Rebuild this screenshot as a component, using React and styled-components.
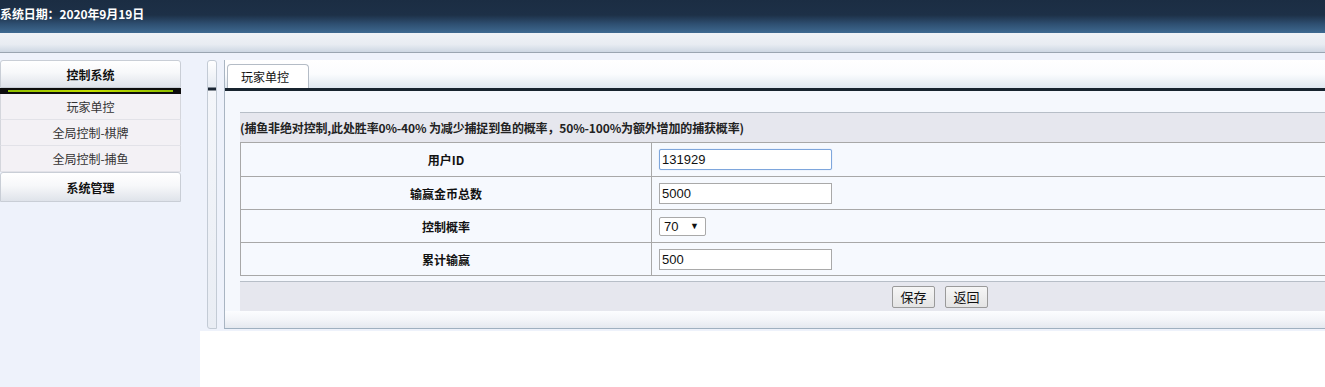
import React from "react";
import styled, { createGlobalStyle } from "styled-components";

const GlobalStyle = createGlobalStyle`
  html, body {
    margin: 0;
    padding: 0;
    background: #fff;
    font-family: "Noto Sans CJK SC", "Liberation Sans", sans-serif;
    font-size: 12px;
    color: #222;
  }
  body { overflow: hidden; }
`;

const Page = styled.div`
  width: 1325px;
  height: 387px;
  display: flex;
  flex-direction: column;
  overflow: hidden;
`;

const TopBar = styled.div`
  height: 33px;
  flex: none;
  background: linear-gradient(
    to bottom,
    #1b2d43 0,
    #1d3047 15px,
    #2e4f71 24px,
    #3f6990 33px
  );
  color: #fff;
  font-weight: bold;
  line-height: 28px;
  white-space: nowrap;
  letter-spacing: -0.1px;
`;

const ToolBar = styled.div`
  height: 19px;
  flex: none;
  background: linear-gradient(to bottom, #f0f2f6 0, #e8ecf2 60%, #cdd7e3 100%);
  border-bottom: 1px solid #9aa5b1;
`;

const Body = styled.div`
  flex: 1;
  display: flex;
  min-height: 0;
`;

const Aside = styled.div`
  width: 200px;
  flex: none;
  background: #eef2fb;
  padding-top: 7px;
`;

const Menu = styled.div`
  width: 181px;
`;

const MenuHead = styled.div`
  height: ${(p) => p.$h}px;
  display: flex;
  align-items: center;
  justify-content: center;
  font-weight: bold;
  color: #111;
  background: linear-gradient(to bottom, #ffffff 0, #f7f8fa 45%, #dfe3ea 100%);
  border: 1px solid #c9ced6;
  border-radius: 3px 3px 0 0;
  box-sizing: border-box;
`;

const MenuBar = styled.div`
  height: 6px;
  background: #0d0d0d;
  padding: 2px 8px 0;
  box-sizing: border-box;
  &::before {
    content: "";
    display: block;
    height: 2px;
    background: linear-gradient(to right, #8fbf00, #c6e000 50%, #8fbf00);
  }
`;

const MenuItem = styled.div`
  height: 26px;
  display: flex;
  align-items: center;
  justify-content: center;
  background: #f3f1f5;
  color: #333;
  border-left: 1px solid #d4d6dc;
  border-right: 1px solid #d4d6dc;
  border-bottom: 1px solid #e2e2e8;
  box-sizing: border-box;
`;

const Main = styled.div`
  flex: 1;
  display: flex;
  flex-direction: column;
  min-width: 0;
`;

const Frame = styled.div`
  display: flex;
  background: #eef2fb;
  padding: 7px 0 2px 7px;
  gap: 7px;
`;

const SideRail = styled.div`
  width: 10px;
  flex: none;
  border: 1px solid #c3cbd5;
  border-radius: 3px 3px 0 3px;
  box-sizing: border-box;
  background: linear-gradient(
    to bottom,
    #ffffff 0,
    #e6ebf2 26px,
    #1a2633 27px,
    #1a2633 29px,
    #f4f6fa 30px,
    #e9edf4 100%
  );
`;

const Panel = styled.div`
  flex: 1;
  min-width: 0;
  border-left: 1px solid #a9b5c2;
  border-bottom: 1px solid #9fb0c0;
  background: #f5f8fd;
`;

const TabStrip = styled.div`
  height: 28px;
  display: flex;
  align-items: flex-end;
  padding-left: 2px;
  background: linear-gradient(to bottom, #ffffff 0, #fbfcfe 50%, #dfe7f0 100%);
  border-bottom: 3px solid #18242f;
`;

const Tab = styled.div`
  width: 82px;
  height: 24px;
  box-sizing: border-box;
  border: 1px solid #b4bcc6;
  border-bottom: none;
  border-radius: 4px 4px 0 0;
  background: #fff;
  padding-left: 13px;
  line-height: 24px;
  color: #111;
`;

const Content = styled.div`
  padding: 21px 0 0 15px;
`;

const Caption = styled.div`
  height: 30px;
  line-height: 30px;
  border-top: 1px solid #b7bec7;
  background: #e6e7ee;
  font-weight: bold;
  color: #222;
  white-space: nowrap;
  letter-spacing: -0.15px;
  box-sizing: border-box;
`;

const Table = styled.div`
  border: 1px solid #a8a8a8;
  border-right: none;
  background: #f6f9fe;
`;

const Row = styled.div`
  display: grid;
  grid-template-columns: 411px 1fr;
  height: 33px;
  border-top: ${(p) => (p.$first ? "none" : "1px solid #a8a8a8")};
  box-sizing: border-box;
`;

const Label = styled.div`
  display: flex;
  align-items: center;
  justify-content: center;
  font-weight: bold;
  color: #111;
  border-right: 1px solid #a8a8a8;
`;

const Value = styled.div`
  display: flex;
  align-items: center;
  padding-left: 7px;
`;

const Input = styled.input`
  width: 173px;
  height: 21px;
  box-sizing: border-box;
  border: 1px solid ${(p) => (p.$focus ? "#7ea6dc" : "#a9a9a9")};
  border-radius: ${(p) => (p.$focus ? "2px" : "0")};
  outline: none;
  padding: 0 2px;
  font-family: "Liberation Sans", Arial, sans-serif;
  font-size: 13px;
  color: #111;
  background: #fff;
  box-shadow: ${(p) => (p.$focus ? "0 0 1px #9fc0ea" : "none")};
`;

const SelectBox = styled.div`
  width: 47px;
  height: 19px;
  box-sizing: border-box;
  border: 1px solid #a9a9a9;
  border-radius: 2px;
  background: #fff;
  display: flex;
  align-items: center;
  justify-content: space-between;
  padding: 0 6px 0 4px;
  font-family: "Liberation Sans", Arial, sans-serif;
  font-size: 13px;
  color: #111;
`;

const Caret = styled.span`
  font-size: 9px;
  line-height: 1;
`;

const ButtonRow = styled.div`
  margin-top: 5px;
  height: 30px;
  border-top: 1px solid #b7bec7;
  background: #e6e7ee;
  box-sizing: border-box;
  display: flex;
  align-items: center;
  gap: 10px;
  padding-left: 652px;
`;

const Button = styled.button`
  width: 43px;
  height: 22px;
  padding: 0;
  border: 1px solid #9a9a9a;
  border-radius: 2px;
  background: linear-gradient(to bottom, #f6f6f6, #e4e4e4);
  font-family: "Noto Sans CJK SC", sans-serif;
  font-size: 13px;
  color: #111;
`;

const PanelFoot = styled.div`
  height: 17px;
  background: linear-gradient(to bottom, #fcfdff 0, #f3f5f9 50%, #e4e8ef 100%);
`;

const Blank = styled.div`
  flex: 1;
  background: #fff;
`;

const rows = [
  { label: "用户ID", value: "131929", focus: true },
  { label: "输赢金币总数", value: "5000" },
  { label: "控制概率", select: "70" },
  { label: "累计输赢", value: "500" },
];

export default function App() {
  return (
    <Page>
      <GlobalStyle />
      <TopBar>系统日期：2020年9月19日</TopBar>
      <ToolBar />
      <Body>
        <Aside>
          <Menu>
            <MenuHead $h={28}>控制系统</MenuHead>
            <MenuBar />
            <MenuItem>玩家单控</MenuItem>
            <MenuItem>全局控制-棋牌</MenuItem>
            <MenuItem>全局控制-捕鱼</MenuItem>
            <MenuHead $h={30}>系统管理</MenuHead>
          </Menu>
        </Aside>
        <Main>
          <Frame>
            <SideRail />
            <Panel>
              <TabStrip>
                <Tab>玩家单控</Tab>
              </TabStrip>
              <Content>
                <Caption>
                  (捕鱼非绝对控制,此处胜率0%-40% 为减少捕捉到鱼的概率，50%-100%为额外增加的捕获概率)
                </Caption>
                <Table>
                  {rows.map((r, i) => (
                    <Row key={r.label} $first={i === 0}>
                      <Label>{r.label}</Label>
                      <Value>
                        {r.select ? (
                          <SelectBox>
                            {r.select}
                            <Caret>▼</Caret>
                          </SelectBox>
                        ) : (
                          <Input
                            $focus={r.focus}
                            defaultValue={r.value}
                            readOnly
                          />
                        )}
                      </Value>
                    </Row>
                  ))}
                </Table>
                <ButtonRow>
                  <Button>保存</Button>
                  <Button>返回</Button>
                </ButtonRow>
              </Content>
              <PanelFoot />
            </Panel>
          </Frame>
          <Blank />
        </Main>
      </Body>
    </Page>
  );
}
